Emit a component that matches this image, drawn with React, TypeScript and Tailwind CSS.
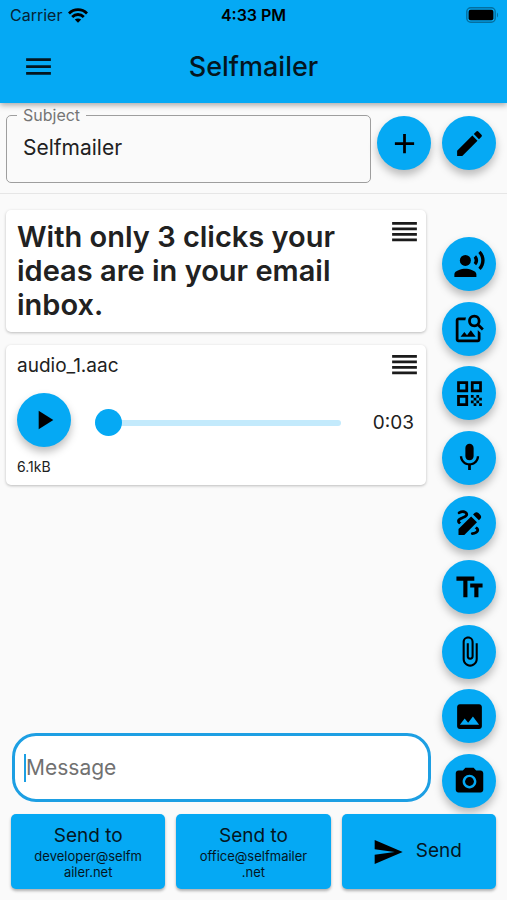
import { useState } from "react";
import type { ReactNode } from "react";
import {
  MdAdd,
  MdAttachFile,
  MdCameraAlt,
  MdDraw,
  MdEdit,
  MdImage,
  MdImageSearch,
  MdMenu,
  MdMic,
  MdPlayArrow,
  MdQrCode,
  MdRecordVoiceOver,
  MdReorder,
  MdSend,
  MdTextFields,
} from "react-icons/md";

const tools = [
  { label: "Dictate", Icon: MdRecordVoiceOver },
  { label: "Scan text from image", Icon: MdImageSearch },
  { label: "Scan QR code", Icon: MdQrCode },
  { label: "Record audio", Icon: MdMic },
  { label: "Draw", Icon: MdDraw },
  { label: "Add text", Icon: MdTextFields },
  { label: "Attach file", Icon: MdAttachFile },
  { label: "Add image", Icon: MdImage },
  { label: "Take photo", Icon: MdCameraAlt },
];

function RoundButton({ label, children }: { label: string; children: ReactNode }) {
  return (
    <button
      type="button"
      aria-label={label}
      className="flex size-[54px] shrink-0 items-center justify-center rounded-full bg-[#05a9f4] text-black shadow-[0_5px_9px_rgba(0,0,0,0.26)]"
    >
      {children}
    </button>
  );
}

function StatusBar() {
  return (
    <div className="grid h-[30px] grid-cols-3 items-center px-2 text-base text-[#052434]">
      <div className="flex items-center gap-1.5 pl-0.5">
        <span>Carrier</span>
        <svg viewBox="0 0 20 15" className="h-[15px] w-5" fill="none" stroke="#000" strokeWidth="2.8" aria-hidden="true">
          <path d="M1 5.4C6 .4 14 .4 19 5.4" />
          <path d="M4.2 8.9c3.3-3.2 8.3-3.2 11.6 0" />
          <path d="M10 14.8 6.8 11.6c1.9-1.6 4.5-1.6 6.4 0z" fill="#000" stroke="none" />
        </svg>
      </div>
      <span className="text-center font-semibold text-black">4:33 PM</span>
      <svg viewBox="0 0 33 16" className="h-4 w-[33px] justify-self-end" aria-hidden="true">
        <rect x="0.8" y="0.8" width="28.4" height="14.4" rx="4" fill="none" stroke="#056f9f" strokeWidth="1.4" />
        <rect x="2.6" y="2.8" width="24.8" height="10.4" rx="2" fill="#000" />
        <path d="M31 5.5c1.4.8 1.4 4.2 0 5z" fill="#056f9f" />
      </svg>
    </div>
  );
}

function DragHandle() {
  return (
    <button type="button" aria-label="Reorder" className="-mr-1 -mt-1.5 flex size-[34px] shrink-0 items-center justify-center text-[#1b1b1b]">
      <MdReorder size={33} />
    </button>
  );
}

function SendTo({ lines }: { lines: string[] }) {
  return (
    <button
      type="button"
      className="flex h-[75px] min-w-0 flex-col items-center justify-center rounded-[5px] bg-[#05a9f4] text-[#04161f] shadow-[0_2px_3px_rgba(0,0,0,0.3)]"
    >
      <span className="text-[19px] leading-6">Send to</span>
      {lines.map((line) => (
        <span key={line} className="text-[13px] leading-4">
          {line}
        </span>
      ))}
    </button>
  );
}

export default function App() {
  const [subject, setSubject] = useState("Selfmailer");
  const [message, setMessage] = useState("");
  const [position, setPosition] = useState(0);

  return (
    <div className="flex min-h-screen flex-col bg-[#fafafa] font-['Inter',sans-serif] text-[#212121]">
      <header className="relative bg-[#05a9f4] shadow-[0_2px_6px_rgba(0,0,0,0.35)]">
        <StatusBar />
        <div className="grid h-[73px] grid-cols-[1fr_auto_1fr] items-center px-[22px]">
          <button type="button" aria-label="Menu" className="justify-self-start text-[#04161f]">
            <MdMenu size={33} />
          </button>
          <h1 className="text-[27px] font-medium leading-8 text-[#04161f]">Selfmailer</h1>
        </div>
      </header>

      <div className="flex gap-1.5 border-b border-[#e6e6e6] pb-2.5 pl-1.5 pr-[11px] pt-1">
        <fieldset className="h-[76px] min-w-0 flex-1 rounded-[5px] border border-[#9e9e9e] px-2.5">
          <legend className="px-1.5 text-base leading-4 text-[#757575]">
            <label htmlFor="subject">Subject</label>
          </legend>
          <input
            id="subject"
            value={subject}
            onChange={(e) => setSubject(e.target.value)}
            className="h-12 w-full bg-transparent px-1.5 text-[21px] outline-none"
          />
        </fieldset>
        <div className="flex gap-[11px] pt-[9px]">
          <RoundButton label="Add subject">
            <MdAdd size={33} />
          </RoundButton>
          <RoundButton label="Edit subject">
            <MdEdit size={33} />
          </RoundButton>
        </div>
      </div>

      <div className="flex flex-1 gap-[11px] pr-[11px]">
        <main className="flex min-w-0 flex-1 flex-col justify-between pb-3 pt-4">
          <div className="flex flex-col gap-[13px] pl-1.5 pr-[5px]">
            <article className="flex items-start justify-between rounded-[5px] bg-white py-2.5 pl-[11px] pr-[9px] shadow-[0_1px_3px_rgba(0,0,0,0.25)]">
              <p className="max-w-[340px] text-[29px] font-semibold leading-[34px]">
                With only 3 clicks your ideas are in your email inbox.
              </p>
              <DragHandle />
            </article>

            <article className="rounded-[5px] bg-white pb-2.5 pl-[11px] pr-[9px] pt-2 shadow-[0_1px_3px_rgba(0,0,0,0.25)]">
              <div className="flex h-10 items-start justify-between">
                <h2 className="text-[19px] leading-[26px]">audio_1.aac</h2>
                <DragHandle />
              </div>
              <div className="flex h-[60px] items-center">
                <div className="self-start">
                  <RoundButton label="Play">
                    <MdPlayArrow size={32} />
                  </RoundButton>
                </div>
                <input
                  type="range"
                  aria-label="Playback position"
                  min={0}
                  max={3}
                  value={position}
                  onChange={(e) => setPosition(Number(e.target.value))}
                  className="ml-6 h-[27px] min-w-0 flex-1 appearance-none bg-transparent [&::-webkit-slider-runnable-track]:h-[6px] [&::-webkit-slider-runnable-track]:rounded-full [&::-webkit-slider-runnable-track]:bg-[#c3eafc] [&::-webkit-slider-thumb]:-mt-[11px] [&::-webkit-slider-thumb]:size-[27px] [&::-webkit-slider-thumb]:appearance-none [&::-webkit-slider-thumb]:rounded-full [&::-webkit-slider-thumb]:bg-[#05a9f4]"
                />
                <span className="w-[76px] pr-[3px] text-right text-[19px]">0:03</span>
              </div>
              <p className="mt-1.5 text-sm leading-4">6.1kB</p>
            </article>
          </div>

          <div className="ml-3 flex h-[69px] items-center rounded-3xl border-[3px] border-[#1d9fe3] bg-white px-[9px]">
            <span className="h-7 w-[2px] bg-[#1d9fe3]" aria-hidden="true" />
            <input
              aria-label="Message"
              placeholder="Message"
              value={message}
              onChange={(e) => setMessage(e.target.value)}
              className="h-full min-w-0 flex-1 bg-transparent text-[21px] outline-none placeholder:text-[#717171]"
            />
          </div>
        </main>

        <nav aria-label="Attachments" className="flex flex-col justify-between gap-2 pb-1.5 pt-[43px]">
          {tools.map(({ label, Icon }) => (
            <RoundButton key={label} label={label}>
              <Icon size={33} />
            </RoundButton>
          ))}
        </nav>
      </div>

      <footer className="relative grid grid-cols-3 gap-[11px] px-[11px] pb-[11px]">
        <SendTo lines={["developer@selfm", "ailer.net"]} />
        <SendTo lines={["office@selfmailer", ".net"]} />
        <button
          type="button"
          className="flex h-[75px] min-w-0 items-center justify-center gap-3 rounded-[5px] bg-[#05a9f4] pr-1 text-[19px] text-[#04161f] shadow-[0_2px_3px_rgba(0,0,0,0.3)]"
        >
          <MdSend size={32} className="text-black" />
          Send
        </button>
      </footer>
    </div>
  );
}
